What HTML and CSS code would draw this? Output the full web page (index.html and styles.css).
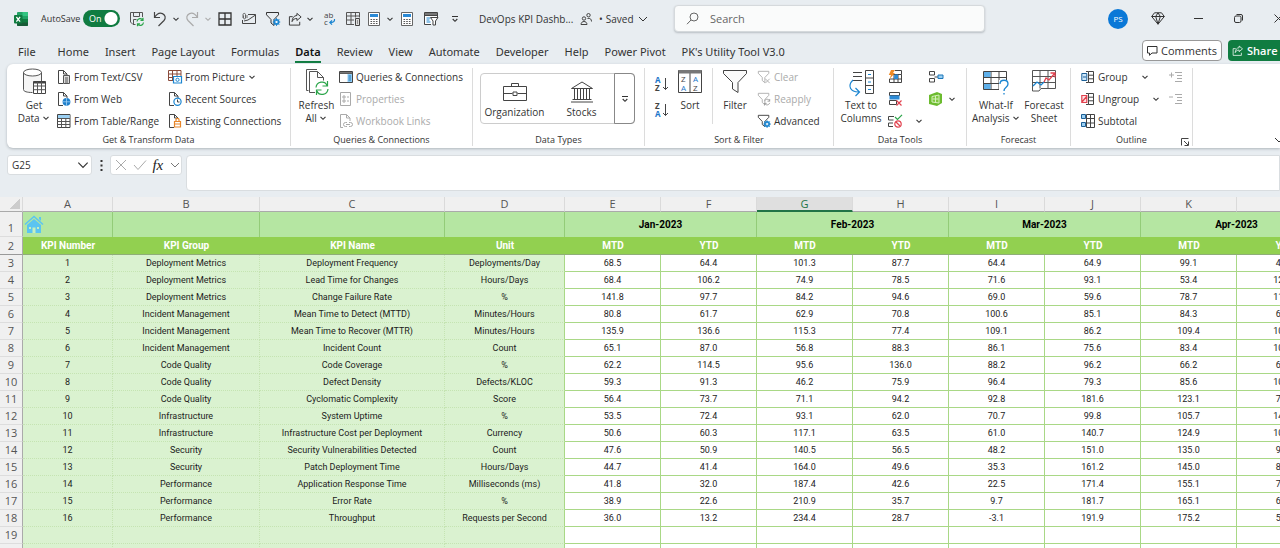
FILE: index.html
```html
<!DOCTYPE html>
<html lang="en">
<head>
<meta charset="utf-8">
<title>DevOps KPI Dashboard</title>
<link rel="stylesheet" href="styles.css">
</head>
<body>
<svg class="sprite" aria-hidden="true">
  <symbol id="chev" viewBox="0 0 8 8"><path d="M1.500 2.800 4 5.300l2.500-2.500" fill="none" stroke="currentColor" stroke-width="1.100"/></symbol>
  <symbol id="chev-wide" viewBox="0 0 12 12"><path d="m2 4 4 4 4-4" fill="none" stroke="currentColor"/></symbol>
  <symbol id="more" viewBox="0 0 8 8"><path d="M1 1.500h6M1.700 4 4 6.300 6.300 4" fill="none" stroke="currentColor" stroke-width="1.100"/></symbol>
  <symbol id="funnel" viewBox="0 0 16 16"><path d="M1.500 1.500h12v2.300L9 8.500v6L6 12V8.500L1.500 3.800z" fill="none" stroke="currentColor"/></symbol>
  <symbol id="gear" viewBox="0 0 8 8"><circle cx="4" cy="4" r="2.200" fill="#fff" stroke="#1c86d1" stroke-width="1.600"/><path d="M4 0v8M0 4h8M1.200 1.200l5.600 5.600M6.800 1.200 1.200 6.800" stroke="#1c86d1" stroke-width=".9"/><circle cx="4" cy="4" r="1" fill="#fff"/></symbol>
  <symbol id="doc" viewBox="0 0 14 14"><path d="M6 13.500H1.500V.5h5l3.500 3.500v2M6.500.5V4H10" fill="#fff" stroke="#444"/></symbol>
  <symbol id="calc" viewBox="0 0 12 14"><path d="M.5.500h11v13H.5z" fill="#fff" stroke="#666"/><path d="M2 2h8v3H2z" fill="#2b8ad6"/><path d="M2.500 7.500h7M2.500 9.500h7M2.500 11.500h7" stroke="#555" stroke-width="1.200" stroke-dasharray="1.600 1.100"/></symbol>
  <symbol id="share" viewBox="0 0 16 14"><path d="M5 4.500H1.500v9h11V10" fill="none" stroke="currentColor"/><path d="M9.500 1 14 4.800 9.500 8.600V6.400C7 6.400 5.300 7.600 4.300 9.800 4.500 6 6.200 3.500 9.500 3.200z" fill="none" stroke="currentColor"/></symbol>
  <symbol id="outline" viewBox="0 0 14 14"><path d="M7.500 1.500h5v11h-5zM7.500 5.200h5M7.500 8.800h5M5 1.500h2.500M5 12.500h2.500" fill="#fff" stroke="#444"/></symbol>
</svg>

<header class="titlebar">
  <svg class="logo" viewBox="0 0 14 14" width="14" height="14"><rect x="3" width="11" height="14" rx="1" fill="#21a366"/><path d="M8.500 0H13a1 1 0 0 1 1 1v3H8.500z" fill="#33c481"/><path d="M3 7h11v6a1 1 0 0 1-1 1H4a1 1 0 0 1-1-1z" fill="#185c37"/><path d="M8.500 7H14v3.500H8.500z" fill="#107c41"/><rect y="3" width="8.500" height="8.500" rx="1" fill="#107c41"/><path d="m2.400 5 3.700 4.600M6.100 5 2.400 9.600" stroke="#fff" stroke-width="1.200"/></svg>
  <label class="autosave" for="autosave">AutoSave</label>
  <span class="toggle"><input type="checkbox" id="autosave" checked><span class="toggle-text" aria-hidden="true">On</span></span>
  <nav class="quick" aria-label="Quick access">
    <button class="s24" aria-label="Save"><svg width="16" height="16" viewBox="0 0 16 16"><path d="M6.500 13.500H4L1.500 11V1.500h12V6M4.500 1.500v4h6v-4M4.500 13.500v-5h3" fill="none" stroke="#555"/><path d="M8 10.500a3.300 3.300 0 0 1 6-1.500M14 6.800V9.300h-2.500M14.500 11.500a3.300 3.300 0 0 1-6 1.500M8.500 15.300v-2.500H11" fill="none" stroke="#2ba54a" stroke-width="1.200"/></svg></button>
    <button class="s22" aria-label="Undo"><svg width="14" height="16" viewBox="0 0 14 16"><path d="M1.500 1v5.500H7M1.500 6.500C4 2.500 7 1.500 9.500 2.600c3 1.400 3.500 4.600 1.500 6.900L5.500 15" fill="none" stroke="#444" stroke-width="1.200"/></svg></button>
    <button class="s10" aria-label="Undo list"><svg width="8" height="8"><use href="#chev"/></svg></button>
    <button class="s22 dim" aria-label="Redo"><svg width="14" height="16" viewBox="0 0 14 16"><path d="M12.500 1v5.500H7M12.500 6.500C10 2.500 7 1.500 4.500 2.600 1.500 4 1 7.200 3 9.500L8.500 15" fill="none" stroke="#aaa" stroke-width="1.200"/></svg></button>
    <button class="s10 dim" aria-label="Redo list"><svg width="8" height="8"><use href="#chev"/></svg></button>
    <button class="s24" aria-label="Borders"><svg width="14" height="14" viewBox="0 0 14 14"><path d="M1 1h12v12H1zM7 1v12M1 7h12" fill="none" stroke="#333" stroke-width="1.300"/></svg></button>
    <button class="s24" aria-label="Email"><svg width="14" height="12" viewBox="0 0 14 12"><path d="M6 1.500h7.500v9H.5V7M2 8l4-1 7.500-5" fill="none" stroke="#444"/><path d="M1 5V1.500C1 0 3.500 0 3.500 1.500V5c0 1.200-2 1.200-2 0V2.500M5 2v3" fill="none" stroke="#666"/></svg></button>
    <button class="s24" aria-label="Advanced filter"><svg width="16" height="16" viewBox="0 0 16 16"><use href="#funnel"/><use href="#gear" x="7.500" y="7" width="8" height="8"/></svg></button>
    <button class="s20" aria-label="Share options"><svg width="15" height="14"><use href="#share"/></svg></button>
    <button class="s10" aria-label="Share list"><svg width="8" height="8"><use href="#chev"/></svg></button>
    <button class="s28" aria-label="Replace"><svg width="14" height="15" viewBox="0 0 14 15"><text x="2" y="7" class="glyph9">ab</text><text x="2" y="14" class="glyph9">c</text><path d="M12.500 8c.5 2.500-1.500 3.500-4.500 3.500M10 9.300 7.800 11.500l2.200 2.200" fill="none" stroke="#1c86d1" stroke-width="1.200"/></svg></button>
    <button class="s20" aria-label="Table"><svg width="15" height="14" viewBox="0 0 15 14"><path d="M.5.500h13v5M8 12.500H.5V.5M.5 4h13M.5 8H8M5 .5v12M9.500.500v5" fill="none" stroke="#555"/><path d="M9.500 6.500h4v7h-4zM11 9h1M11 11h1" fill="#ddd" stroke="#444"/></svg></button>
    <button class="s22" aria-label="Calculate"><svg width="12" height="14"><use href="#calc"/></svg></button>
    <button class="s10" aria-label="Calculate list"><svg width="8" height="8"><use href="#chev"/></svg></button>
    <button class="s24" aria-label="Calculate sheet"><svg width="12" height="14"><use href="#calc"/></svg></button>
    <button class="s24" aria-label="Filter form"><svg width="15" height="14" viewBox="0 0 15 14"><path d="M7 12.500H.5V.5h13V5M.5 3.500h13" fill="#fff" stroke="#444"/><path d="M1 1h12v2H1z" fill="#777"/><path d="M2.500 6h4M2.500 8h3M2.500 10h4" stroke="#1c86d1"/><path d="M6.500 5.500h7.500l-2.500 3.500v4H9V9z" fill="#fff" stroke="#444"/></svg></button>
    <button class="s24" aria-label="Customize"><svg width="8" height="8"><use href="#more"/></svg></button>
  </nav>
  <button class="doc-name">DevOps KPI Dashb...</button>
  <svg class="people" width="12" height="12" viewBox="0 0 12 12" fill="none" stroke="#444"><circle cx="4" cy="5.500" r="1.700"/><path d="M1 11.500C1 7.500 7 7.500 7 11.500z"/><circle cx="8.500" cy="2.200" r="1.700"/><path d="M7.500 5.500c2.500-.8 4 .7 4 3"/></svg>
  <button class="saved"><span>•</span><span>Saved</span><svg width="12" height="12"><use href="#chev-wide"/></svg></button>
  <label class="search"><svg width="13" height="13" viewBox="0 0 13 13" fill="none" stroke="#666"><circle cx="8" cy="5" r="4"/><path d="M5 8 1 12.200"/></svg><input type="search" placeholder="Search" aria-label="Search"></label>
  <div class="window-controls">
    <button class="avatar">PS</button>
    <button aria-label="Premium"><svg width="14" height="13" viewBox="0 0 14 13"><path d="M3.500.8h7L13.300 4.500 7 12.200.7 4.500zM.7 4.500h12.600M4.700 4.500 7 12.200l2.300-7.700L7 .8z" fill="none" stroke="#333"/></svg></button>
    <button aria-label="Minimize"><svg width="9" height="9" viewBox="0 0 9 9"><path d="M0 4.500h9" stroke="#333"/></svg></button>
    <button aria-label="Restore"><svg width="9" height="9" viewBox="0 0 9 9" fill="none" stroke="#333"><rect x=".5" y="2" width="6.500" height="6.500" rx="1.500"/><path d="M2.500.5H7A1.500 1.500 0 0 1 8.500 2v4.500"/></svg></button>
    <button aria-label="Close"><svg width="9" height="9" viewBox="0 0 9 9"><path d="m.5.500 8 8M8.500.500l-8 8" stroke="#333"/></svg></button>
  </div>
</header>

<div class="tabbar">
  <nav class="tabs" aria-label="Ribbon tabs">
    <button class="file">File</button><button>Home</button><button>Insert</button><button>Page Layout</button><button>Formulas</button><button class="active">Data</button><button>Review</button><button>View</button><button>Automate</button><button>Developer</button><button>Help</button><button>Power Pivot</button><button>PK's Utility Tool V3.0</button>
  </nav>
  <button class="comments"><svg width="11" height="10" viewBox="0 0 11 10"><path d="M.5.500h9.500v6.500H5L2.500 9.300V7h-2z" fill="none" stroke="#333"/></svg>Comments</button>
  <button class="share"><svg width="12" height="11"><use href="#share"/></svg>Share</button>
</div>

<main>
<section class="ribbon" aria-label="Data tools">
  <div class="group g-get">
    <div class="tools">
      <button class="big"><svg width="26" height="28" viewBox="0 0 26 28"><path d="M2.500 4.500v17c0 2 3.500 3 9 3h9v-20z" fill="#f5f5f5"/><ellipse cx="11.500" cy="4.500" rx="9" ry="3.500" fill="#fff" stroke="#555"/><path d="M2.500 4.500v17c0 2 3.500 3 9 3M20.500 4.500V14" fill="none" stroke="#555"/><path d="M12.500 13.500h12v12h-12z" fill="#fff" stroke="#444"/><path d="M12.500 14.500h12" stroke="#444" stroke-width="2"/><path d="M12.500 18h12M12.500 21.700h12M16.500 14v12M20.500 14v12" stroke="#555"/></svg><span>Get<br>Data <svg width="8" height="8"><use href="#chev"/></svg></span></button>
      <div class="stack c-from">
        <button><svg width="14" height="14" viewBox="0 0 14 14"><use href="#doc"/><path d="M6.500 5.500h6v8h-6zM8 8h3M8 10h3M8 12h3" fill="#ddd" stroke="#555"/></svg>From Text/CSV</button>
        <button><svg width="14" height="14" viewBox="0 0 14 14"><use href="#doc"/><circle cx="9.500" cy="9.800" r="3.900" fill="#1f7fcb"/><path d="M5.600 9.800h7.800M9.500 6v7.600" stroke="#9fd0f5" stroke-width=".8"/></svg>From Web</button>
        <button><svg width="14" height="14" viewBox="0 0 14 14"><path d="M.5.500h12.500v13H.5z" fill="#fff" stroke="#444"/><path d="M1 1h11.500v3H1z" fill="#9bd0f3"/><path d="M.5 4.500H13M.5 7.500H13M.5 10.500H13M4.500 4.500v9M8.800 4.500v9" stroke="#555"/></svg>From Table/Range</button>
      </div>
      <div class="stack">
        <button><svg width="14" height="14" viewBox="0 0 14 14"><path d="M.5.500h12.500v10H.5zM.5 4H13M.5 7.500H13M4.500.500v10M9 .5v10" fill="#fff" stroke="#8a4b3b"/><path d="M5.500 6.500h8v6.500h-8z" fill="#fff" stroke="#1c86d1" stroke-width="1.200"/><circle cx="9.500" cy="9.800" r="1.600" fill="none" stroke="#1c86d1"/></svg>From Picture <svg width="8" height="8"><use href="#chev"/></svg></button>
        <button><svg width="14" height="14" viewBox="0 0 14 14"><use href="#doc"/><circle cx="9.500" cy="9.800" r="3.600" fill="#fff" stroke="#1c86d1" stroke-width="1.200"/><path d="M9.500 7.500V10h2" fill="none" stroke="#444"/></svg>Recent Sources</button>
        <button><svg width="14" height="14" viewBox="0 0 14 14"><use href="#doc"/><path d="M6.500 7.500h6V13h-6zM8 7.500V5.500c0-1.500 3-1.500 3 0v2M6.500 10h6" fill="#fff" stroke="#e8862a" stroke-width="1.200"/></svg>Existing Connections</button>
      </div>
    </div>
    <h2>Get &amp; Transform Data</h2>
  </div>

  <div class="group g-queries">
    <div class="tools">
      <button class="big"><svg width="26" height="28" viewBox="0 0 26 28"><path d="M4.500 22.500h-2v-21H13M11 24.500H5.500v-21h8l6 6v3M13.500 3.500v6h6" fill="none" stroke="#555"/><path d="M12 19.500c.5-6 9-7.500 11-2M23.500 13v5h-5M24 21c-.5 6-9 7.500-11 2M12.500 27v-5h5" fill="none" stroke="#2ba54a" stroke-width="1.200"/></svg><span>Refresh<br>All <svg width="8" height="8"><use href="#chev"/></svg></span></button>
      <div class="stack">
        <button><svg width="14" height="14" viewBox="0 0 14 14"><path d="M.5 1.500h13v11H.5zM.5 3.500h13" fill="#fff" stroke="#444"/><path d="M1 2h12v1.500H1z" fill="#777"/><path d="M8.500 4H13v8H8.500z" fill="#8fcbf3"/><path d="M9.500 6h2.500M9.500 8h2.500M9.500 10h2.500" stroke="#1c76b9"/></svg>Queries &amp; Connections</button>
        <button disabled><svg width="14" height="14" viewBox="0 0 14 14"><path d="M1.500.5h10v13h-10zM4 4h2v2H4zM4 8h2v2H4zM8 5h2M8 9h2" fill="none" stroke="#aaa"/></svg>Properties</button>
        <button disabled><svg width="14" height="14" viewBox="0 0 14 14"><path d="M4 13.500H1.500V.5h6L11 4v3M7.500.5V4H11" fill="none" stroke="#aaa"/><path d="M8 12.500H6.500a2 2 0 0 1 0-4H8M10 8.500h1.500a2 2 0 0 1 0 4H10M7 10.500h4" fill="none" stroke="#aaa"/></svg>Workbook Links</button>
      </div>
    </div>
    <h2>Queries &amp; Connections</h2>
  </div>

  <div class="group g-types">
    <div class="tools">
      <div class="gallery">
        <button><svg width="26" height="22" viewBox="0 0 26 22" fill="none" stroke="#444"><path d="M1.500 5.500h23v14h-23zM9.500 5.500v-3h7v3M1.500 12.500h9M15.500 12.500h9M11 11h4v3.500h-4z"/></svg>Organization</button>
        <button><svg width="26" height="22" viewBox="0 0 26 22" fill="none" stroke="#444"><path d="M2.500 7.500 13 1l10.500 6.500zM3.500 18.500h19M2 21h22M5.500 8v10M8.500 8v10M11.500 8v10M14.500 8v10M17.500 8v10M20.500 8v10"/></svg>Stocks</button>
        <button class="gallery-more" aria-label="More data types"><svg width="8" height="8"><use href="#more"/></svg></button>
      </div>
    </div>
    <h2>Data Types</h2>
  </div>

  <div class="group g-sort">
    <div class="tools">
      <div class="az">
        <button aria-label="Sort A to Z"><svg width="15" height="16" viewBox="0 0 15 16"><text x="1" y="7" class="glyph8 blue">A</text><text x="1" y="15" class="glyph8">Z</text><path d="M11.500 2v11.500M9 11l2.500 2.500L14 11" fill="none" stroke="#444"/></svg></button>
        <button aria-label="Sort Z to A"><svg width="15" height="16" viewBox="0 0 15 16"><text x="1" y="7" class="glyph8">Z</text><text x="1" y="15" class="glyph8 blue">A</text><path d="M11.500 2v11.500M9 11l2.500 2.500L14 11" fill="none" stroke="#444"/></svg></button>
      </div>
      <button class="big"><svg width="26" height="28" viewBox="0 0 26 28"><path d="M1.500 2.500h23v22h-23zM13 5v20" fill="#fff" stroke="#444"/><path d="M1.500 2h23v3.500h-23z" fill="#777"/><text x="4" y="14" class="glyph9">Z</text><text x="4" y="23" class="glyph9 blue">A</text><text x="16" y="14" class="glyph9 blue">A</text><text x="16" y="23" class="glyph9">Z</text></svg><span>Sort</span></button>
      <i class="rule"></i>
      <button class="big filter"><svg width="26" height="28" viewBox="0 0 26 28"><path d="M1.500 2.500h23v3L16 14.500v10L10.500 21v-6.500L1.500 5.500z" fill="#fafafa" stroke="#444"/></svg><span>Filter</span></button>
      <div class="stack">
        <button disabled><svg width="14" height="14" viewBox="0 0 16 16"><use href="#funnel"/><path d="m9.500 10 5 5M14.500 10l-5 5" stroke="#aaa"/></svg>Clear</button>
        <button disabled><svg width="14" height="14" viewBox="0 0 16 16"><use href="#funnel"/><path d="M8.500 10.500c1-3 5-3 6 0M14.500 8v2.500H12M14.500 12.500c-1 3-5 3-6 0M8.500 15.500V13H11" fill="none" stroke="#999"/></svg>Reapply</button>
        <button><svg width="14" height="14" viewBox="0 0 16 16"><use href="#funnel"/><use href="#gear" x="7" y="7" width="9" height="9"/></svg>Advanced</button>
      </div>
    </div>
    <h2>Sort &amp; Filter</h2>
  </div>

  <div class="group g-tools">
    <div class="tools">
      <button class="big"><svg width="26" height="28" viewBox="0 0 26 28"><path d="M17.500 2.500h8v23h-8zM17.500 10h8M17.500 17.500h8" fill="#fff" stroke="#444"/><path d="M20 6.500h3M20 14h3M20 21.500h3" stroke="#1c86d1"/><path d="M5 4.500h9M5 8.500h9M5 12.500h9" stroke="#444"/><path d="M5 12c-6 6-2.500 12 5.500 12M7.500 20l4 4-4 4" fill="none" stroke="#1c86d1" stroke-width="1.200"/></svg><span>Text to<br>Columns</span></button>
      <div class="icons">
        <button aria-label="Flash Fill"><svg width="15" height="14" viewBox="0 0 15 14"><path d="M3.500 4.500h10v8h-12V9M1.500 9h12M6 4v9M10 4v9M7 .5h6.500v4" fill="none" stroke="#444"/><path d="M6.500 4.500h3.500V9H6z" fill="#2b8ad6"/><path d="M3 0h4L5 3h2L1.500 9 3 5H.8z" fill="#f08a24"/></svg></button>
        <button aria-label="Remove Duplicates"><svg width="15" height="14" viewBox="0 0 15 14"><path d="M1.500.500h10v3h-10zM1.500 8.500h7v4h-7z" fill="#fff" stroke="#444"/><path d="M1.500 3.500h10v4h-10z" fill="#2b8ad6"/><path d="m8.500 8.500 5 5M13.500 8.500l-5 5" stroke="#e2424f" stroke-width="1.200"/></svg></button>
        <span class="pair"><button aria-label="Data Validation"><svg width="15" height="14" viewBox="0 0 15 14"><path d="M6 2.500H.5v3.500h5M5 9H.5v3.500H5" fill="none" stroke="#444"/><path d="m7 3 2.500 2.500L14 .8" fill="none" stroke="#2ba54a" stroke-width="1.200"/><circle cx="10" cy="10" r="3.200" fill="#fff" stroke="#e2424f" stroke-width="1.200"/><path d="m8 8 4 4" stroke="#e2424f" stroke-width="1.200"/></svg></button><button aria-label="Data Validation list"><svg width="8" height="8"><use href="#chev"/></svg></button></span>
      </div>
      <div class="icons second">
        <button aria-label="Consolidate"><svg width="15" height="14" viewBox="0 0 15 14"><path d="M.5 1.500h5v3.500h-5zM.5 8.500h5V12h-5z" fill="#fff" stroke="#444"/><path d="M5.500 7H9" stroke="#444"/><path d="M9 5h5v3.500H9z" fill="#9bd0f3" stroke="#1c76b9"/></svg></button>
        <span class="pair"><button aria-label="Data Model"><svg width="15" height="14" viewBox="0 0 15 14"><path d="M0 3 8 0l5 2v9l-5 3-8-2z" fill="#6cbb2f"/><path d="M3 4.500 10 3v8l-7-1z" fill="#7fc83f" stroke="#d5f0bd"/><path d="M3.500 7h6M6.500 4v6.500" stroke="#d5f0bd"/></svg></button><button aria-label="Data Model list"><svg width="8" height="8"><use href="#chev"/></svg></button></span>
      </div>
    </div>
    <h2>Data Tools</h2>
  </div>

  <div class="group g-forecast">
    <div class="tools">
      <button class="big"><svg width="28" height="28" viewBox="0 0 28 28"><path d="M1.500 3.500h23v18h-23zM1.500 9.500h23M1.500 15.500h23M9 3.500v18M17 3.500v18" fill="#fff" stroke="#444"/><path d="M2 4h6.500v5H2zM2 16h6.500v5H2z" fill="#5fb0ea"/><path d="M17 12h10v14H17z" fill="#fff"/><path d="M18 16c0-5 8-5 8 0 0 3.500-4 3-4 7" fill="none" stroke="#1c86d1" stroke-width="1.300"/><path d="M22 25v1.500" stroke="#1c86d1" stroke-width="1.300"/></svg><span>What-If<br>Analysis <svg width="8" height="8"><use href="#chev"/></svg></span></button>
      <button class="big"><svg width="26" height="28" viewBox="0 0 26 28"><path d="M1.500 2.500h23v18H10l-2 2.500H1.500zM1.500 8.500h23M1.500 14.500h23M9 2.500v18M17 2.500v18" fill="#fff" stroke="#555"/><path d="m2 18 4-4 4 3 3-3" fill="none" stroke="#1c86d1" stroke-width="1.300"/><path d="m13 14 2-4 3 2 6-7M19.500 5H24v4.500" fill="none" stroke="#e2424f" stroke-width="1.300"/></svg><span>Forecast<br>Sheet</span></button>
    </div>
    <h2>Forecast</h2>
  </div>

  <div class="group g-outline">
    <div class="tools">
      <div class="stack">
        <span class="split"><button><svg width="14" height="14" viewBox="0 0 14 14"><use href="#outline"/><path d="M.8 3.500h5v7h-5z" fill="#cfe8fa" stroke="#1c5f96"/><path d="M2 7h3" stroke="#1c5f96"/></svg>Group</button><button aria-label="Group list"><svg width="8" height="8"><use href="#chev"/></svg></button></span>
        <span class="split"><button><svg width="14" height="14" viewBox="0 0 14 14"><use href="#outline"/><path d="M.8 3.500h5v7h-5zM1 10l5-6" fill="#fde3e5" stroke="#e2424f" stroke-width="1.200"/></svg>Ungroup</button><button aria-label="Ungroup list"><svg width="8" height="8"><use href="#chev"/></svg></button></span>
        <button><svg width="14" height="14" viewBox="0 0 14 14"><path d="M5.500.500h8v13h-8zM9.500.500v13M5.500 4.500h8M5.500 9h8" fill="#fff" stroke="#444"/><path d="M.5.500h4v4h-4zM.5 8.500h4v4h-4z" fill="#9bd0f3" stroke="#1c5f96"/></svg>Subtotal</button>
      </div>
      <div class="icons detail">
        <button disabled aria-label="Show Detail"><svg width="14" height="12" viewBox="0 0 14 12"><path d="M0 4h5M2.500 1.500v5M6 1.500h7M8 4.500h5M8 7.500h5M6 10.500h7" stroke="#aaa"/></svg></button>
        <button disabled aria-label="Hide Detail"><svg width="14" height="12" viewBox="0 0 14 12"><path d="M0 4h4M6 1.500h7M8 4.500h5M8 7.500h5M6 10.500h7" stroke="#aaa"/></svg></button>
      </div>
    </div>
    <h2>Outline</h2>
    <button class="launcher" aria-label="Outline settings"><svg width="8" height="8" viewBox="0 0 8 8"><path d="M.5 7.500V.5h7M3 3l4 4M7.500 3.500v4h-4" fill="none" stroke="#444"/></svg></button>
  </div>
  <button class="collapse" aria-label="Collapse ribbon"><svg width="12" height="12"><use href="#chev-wide"/></svg></button>
</section>

<div class="formula-row">
  <label class="name-box"><input type="text" value="G25" aria-label="Name box"><svg width="14" height="14"><use href="#chev-wide"/></svg></label>
  <svg class="dots" width="3" height="11" viewBox="0 0 3 11" fill="#333"><path d="M.5 0h2v2h-2zM.5 4.500h2v2h-2zM.5 9h2v2h-2z"/></svg>
  <div class="fx">
    <button aria-label="Cancel"><svg width="12" height="12" viewBox="0 0 12 12"><path d="m1 1 10 10M11 1 1 11" stroke="#aaa"/></svg></button>
    <button aria-label="Enter"><svg width="14" height="12" viewBox="0 0 14 12"><path d="m1 6 4 4.500L13 1.500" fill="none" stroke="#aaa"/></svg></button>
    <button class="fx-label">fx</button>
    <button aria-label="Functions"><svg width="12" height="12"><use href="#chev-wide"/></svg></button>
  </div>
  <input class="formula" type="text" aria-label="Formula bar">
</div>

<div class="sheet">
<svg class="home" viewBox="0 0 20 18" width="20" height="18" aria-hidden="true"><path d="M1 9.500 10 1.500l9 8" fill="none" stroke="#5bc4f1" stroke-width="1.500"/><path d="M3 10 10 4l7 6v8H3z" fill="#5bc4f1"/><path d="M15 2h2v4l-2-2z" fill="#5bc4f1"/><path d="M8.500 12.500h3V18h-3zM5 12h2v2H5zM13 12h2v2h-2z" fill="#c6efc0"/></svg>
<table>
<colgroup><col class="w-num"><col class="w-a"><col class="w-b"><col class="w-c"><col class="w-d"><col span="8" class="w-v"></colgroup>
<thead>
<tr class="letters"><th class="corner"></th><th>A</th><th>B</th><th>C</th><th>D</th><th>E</th><th>F</th><th class="sel">G</th><th>H</th><th>I</th><th>J</th><th>K</th><th>L</th></tr>
<tr class="months"><th>1</th><td></td><td></td><td></td><td></td><td colspan="2">Jan-2023</td><td colspan="2">Feb-2023</td><td colspan="2">Mar-2023</td><td colspan="2">Apr-2023</td></tr>
<tr class="titles"><th>2</th><td>KPI Number</td><td>KPI Group</td><td>KPI Name</td><td>Unit</td><td>MTD</td><td>YTD</td><td>MTD</td><td>YTD</td><td>MTD</td><td>YTD</td><td>MTD</td><td>YTD</td></tr>
</thead>
<tbody>
<tr><th>3</th><td>1</td><td>Deployment Metrics</td><td>Deployment Frequency</td><td>Deployments/Day</td><td>68.5</td><td>64.4</td><td>101.3</td><td>87.7</td><td>64.4</td><td>64.9</td><td>99.1</td><td>48.2</td></tr>
<tr><th>4</th><td>2</td><td>Deployment Metrics</td><td>Lead Time for Changes</td><td>Hours/Days</td><td>68.4</td><td>106.2</td><td>74.9</td><td>78.5</td><td>71.6</td><td>93.1</td><td>53.4</td><td>122.4</td></tr>
<tr><th>5</th><td>3</td><td>Deployment Metrics</td><td>Change Failure Rate</td><td>%</td><td>141.8</td><td>97.7</td><td>84.2</td><td>94.6</td><td>69.0</td><td>59.6</td><td>78.7</td><td>111.3</td></tr>
<tr><th>6</th><td>4</td><td>Incident Management</td><td>Mean Time to Detect (MTTD)</td><td>Minutes/Hours</td><td>80.8</td><td>61.7</td><td>62.9</td><td>70.8</td><td>100.6</td><td>85.1</td><td>84.3</td><td>65.0</td></tr>
<tr><th>7</th><td>5</td><td>Incident Management</td><td>Mean Time to Recover (MTTR)</td><td>Minutes/Hours</td><td>135.9</td><td>136.6</td><td>115.3</td><td>77.4</td><td>109.1</td><td>86.2</td><td>109.4</td><td>102.7</td></tr>
<tr><th>8</th><td>6</td><td>Incident Management</td><td>Incident Count</td><td>Count</td><td>65.1</td><td>87.0</td><td>56.8</td><td>88.3</td><td>86.1</td><td>75.6</td><td>83.4</td><td>104.1</td></tr>
<tr><th>9</th><td>7</td><td>Code Quality</td><td>Code Coverage</td><td>%</td><td>62.2</td><td>114.5</td><td>95.6</td><td>136.0</td><td>88.2</td><td>96.2</td><td>66.2</td><td>63.9</td></tr>
<tr><th>10</th><td>8</td><td>Code Quality</td><td>Defect Density</td><td>Defects/KLOC</td><td>59.3</td><td>91.3</td><td>46.2</td><td>75.9</td><td>96.4</td><td>79.3</td><td>85.6</td><td>103.5</td></tr>
<tr><th>11</th><td>9</td><td>Code Quality</td><td>Cyclomatic Complexity</td><td>Score</td><td>56.4</td><td>73.7</td><td>71.1</td><td>94.2</td><td>92.8</td><td>181.6</td><td>123.1</td><td>74.6</td></tr>
<tr><th>12</th><td>10</td><td>Infrastructure</td><td>System Uptime</td><td>%</td><td>53.5</td><td>72.4</td><td>93.1</td><td>62.0</td><td>70.7</td><td>99.8</td><td>105.7</td><td>142.0</td></tr>
<tr><th>13</th><td>11</td><td>Infrastructure</td><td>Infrastructure Cost per Deployment</td><td>Currency</td><td>50.6</td><td>60.3</td><td>117.1</td><td>63.5</td><td>61.0</td><td>140.7</td><td>124.9</td><td>106.8</td></tr>
<tr><th>14</th><td>12</td><td>Security</td><td>Security Vulnerabilities Detected</td><td>Count</td><td>47.6</td><td>50.9</td><td>140.5</td><td>56.5</td><td>48.2</td><td>151.0</td><td>135.0</td><td>94.3</td></tr>
<tr><th>15</th><td>13</td><td>Security</td><td>Patch Deployment Time</td><td>Hours/Days</td><td>44.7</td><td>41.4</td><td>164.0</td><td>49.6</td><td>35.3</td><td>161.2</td><td>145.0</td><td>84.6</td></tr>
<tr><th>16</th><td>14</td><td>Performance</td><td>Application Response Time</td><td>Milliseconds (ms)</td><td>41.8</td><td>32.0</td><td>187.4</td><td>42.6</td><td>22.5</td><td>171.4</td><td>155.1</td><td>74.9</td></tr>
<tr><th>17</th><td>15</td><td>Performance</td><td>Error Rate</td><td>%</td><td>38.9</td><td>22.6</td><td>210.9</td><td>35.7</td><td>9.7</td><td>181.7</td><td>165.1</td><td>65.2</td></tr>
<tr><th>18</th><td>16</td><td>Performance</td><td>Throughput</td><td>Requests per Second</td><td>36.0</td><td>13.2</td><td>234.4</td><td>28.7</td><td>-3.1</td><td>191.9</td><td>175.2</td><td>55.5</td></tr>
<tr><th>19</th><td></td><td></td><td></td><td></td><td></td><td></td><td></td><td></td><td></td><td></td><td></td><td></td></tr>
<tr><th>20</th><td></td><td></td><td></td><td></td><td></td><td></td><td></td><td></td><td></td><td></td><td></td><td></td></tr>
</tbody>
</table>
</div>
</main>
</body>
</html>
```
FILE: styles.css
```css
* { box-sizing: border-box; }
body {
  margin: 0;
  height: 100vh;
  overflow: hidden;
  background: #e8edf1;
  color: #333;
  font: 10px/16px "Open Sans", "Noto Sans", sans-serif;
}
button, input { font: inherit; color: inherit; border: 0; padding: 0; margin: 0; background: none; }
button { display: flex; align-items: center; justify-content: center; white-space: nowrap; }
svg { flex: none; display: block; overflow: visible; }
.sprite { position: absolute; width: 0; height: 0; }
.glyph8, .glyph9 { font: 700 8px "Open Sans", sans-serif; fill: #444; }
.glyph9 { font-weight: 400; }
.blue { fill: #1c76c9; }

.titlebar { display: flex; align-items: center; height: 37px; padding-left: 14px; overflow: hidden; }
.autosave { width: 42px; margin-left: 13px; white-space: nowrap; font-size: 9px; }
.toggle { display: grid; align-items: center; width: 37px; }
.toggle > * { grid-area: 1 / 1; }
.toggle input { appearance: none; width: 37px; height: 17px; border-radius: 9px; background: radial-gradient(circle at 28px 50%, #fff 6px, transparent 7px) #107c41; }
.toggle-text { padding-left: 6px; color: #fff; font-size: 9px; pointer-events: none; }
.quick { display: flex; align-items: center; margin-left: 5px; }
.quick button { height: 24px; }
.s10 { width: 10px; }
.s20 { width: 20px; }
.s22 { width: 22px; }
.s24 { width: 24px; }
.s28 { width: 28px; }
.dim { color: #aaa; }
.doc-name { width: 92px; margin-left: 12px; justify-content: flex-start; }
.people { margin: 0 7px 0 9px; }
.saved { width: 48px; gap: 3px; justify-content: flex-start; }
.search { display: flex; align-items: center; gap: 11px; flex: 0 1 311px; height: 27px; margin-left: 27px; padding: 0 11px; border: 1px solid #d5d9dc; border-radius: 4px; background: #fafbfb; box-shadow: 0 1px 2px #b9bfc4; }
.search input { flex: 1; min-width: 0; outline: 0; font-size: 11px; }
.search input::placeholder { color: #666; opacity: 1; }
.window-controls { display: flex; align-items: center; margin-left: auto; margin-right: -18px; }
.window-controls button { width: 40px; height: 24px; }
.window-controls .avatar { width: 20px; height: 20px; margin-right: 10px; border-radius: 50%; background: #0a78d7; color: #fff; font-size: 8px; }

.tabbar { display: flex; align-items: center; height: 27px; overflow: hidden; font-size: 11px; }
.tabs { display: flex; flex: 1; gap: 16px; padding: 2px 0 0 18px; font-family: "Noto Sans", sans-serif; }
.tabs button { height: 22px; }
.tabs .file { margin-right: 6px; }
.tabs .active { font-weight: 600; color: #111; box-shadow: inset 0 -2px #107c41; }
.comments { width: 80px; height: 21px; gap: 3px; border: 1px solid #999; border-radius: 4px; background: #fff; }
.share { width: 60px; height: 21px; margin: 0 -8px 0 6px; gap: 3px; padding-left: 4px; justify-content: flex-start; border-radius: 4px; background: #107c41; color: #fff; font-weight: 600; }

main { display: flex; flex-direction: column; min-width: 0; }
.ribbon { display: flex; height: 84px; margin-left: 7px; padding: 4px 0 2px; border-radius: 6px 0 0 6px; background: #fff; box-shadow: 0 1px 3px #aeb5ba; }
.group { position: relative; display: flex; flex-direction: column; flex: none; border-right: 1px solid #dcdcdc; }
.group h2 { margin: 0; font-size: 9px; line-height: 12px; font-weight: 400; text-align: center; }
.tools { display: flex; align-items: flex-start; height: 66px; }
.big { flex-direction: column; justify-content: flex-start; gap: 3px; }
.big span { line-height: 13px; }
.big span svg, .stack button svg + svg { display: inline-block; }
.stack { display: flex; flex-direction: column; }
.stack button { height: 22px; gap: 3px; justify-content: flex-start; padding-bottom: 4px; }
button:disabled { color: #aaa; }
.g-get { width: 284px; }
.g-get .big { width: 50px; padding-left: 4px; }
.c-from { width: 111px; }
.g-queries { width: 182px; }
.g-queries .big { width: 48px; padding-left: 3px; }
.g-types { width: 172px; }
.g-sort { width: 189px; }
.g-tools { width: 133px; }
.g-forecast { width: 104px; }
.g-outline { width: 122px; }
.gallery { display: flex; width: 155px; height: 51px; margin: 5px 0 0 7px; border: 1px solid #ccc; border-radius: 4px; }
.gallery button { flex: 1; flex-direction: column; gap: 1px; padding-top: 3px; }
.gallery .gallery-more { flex: 0 0 21px; margin: -1px; padding: 0; border: 1px solid #888; border-radius: 0 4px 4px 0; }
.az { display: flex; flex-direction: column; gap: 10px; padding: 8px 8px 0 9px; }
.rule { width: 1px; height: 56px; margin: 0 8px 0 9px; background: #dcdcdc; }
.filter { width: 28px; margin-right: 8px; }
.g-tools .big { width: 54px; }
.icons { display: flex; flex-direction: column; align-items: flex-start; }
.icons button { height: 22px; padding-bottom: 4px; }
.pair { display: flex; gap: 12px; }
.second { margin-left: 6px; }
.second .pair { gap: 4px; }
.g-forecast .tools { padding-left: 5px; }
.g-forecast .big { width: 48px; }
.g-outline .stack { width: 88px; padding-left: 10px; }
.split { display: flex; gap: 13px; }
.detail { padding-left: 10px; }
.launcher { position: absolute; right: 3px; bottom: 0; }
.collapse { margin-left: auto; margin-right: -5px; align-self: flex-end; }

.formula-row { display: flex; align-items: flex-start; height: 49px; padding: 7px 0 0 7px; }
.name-box, .fx { display: flex; align-items: center; height: 20px; border: 1px solid #d9dde0; border-radius: 3px; background: #fff; }
.name-box { width: 85px; padding: 0 1px 0 4px; }
.name-box input { flex: 1; min-width: 0; outline: 0; }
.dots { margin: 5px 7px 0 8px; }
.fx { width: 72px; padding: 0 0 0 4px; justify-content: space-between; color: #777; }
.fx-label { font: italic 15px "Liberation Serif", serif; color: #222; }
.formula { flex: 1; height: 36px; margin-left: 4px; border: 1px solid #d9dde0; border-radius: 4px 0 0 4px; background: #fff; outline: 0; }

.sheet { position: relative; overflow: hidden; }
.home { position: absolute; left: 24px; top: 18px; }
table { table-layout: fixed; width: 1332px; border-collapse: separate; border-spacing: 0; font: 9px/16px Roboto, sans-serif; color: #1c1c1c; }
.w-num { width: 23px; }
.w-a { width: 90px; }
.w-b { width: 147px; }
.w-c { width: 185px; }
.w-d { width: 120px; }
.w-v { width: 96px; }
th, td { height: 17px; padding: 0; text-align: center; white-space: nowrap; }
th { border-right: 1px solid #aaa; border-bottom: 1px solid #ddd; background: #f0f0f0; color: #555; font: 11px/16px "Open Sans", sans-serif; }
td { border-right: 1px solid #a9d886; border-bottom: 1px solid #a9d886; background: #fff; }
td:nth-child(-n+5) { border-right: 1px dotted #c5e4b2; border-bottom: 1px dotted #c5e4b2; background: #daf2d0; }
td:nth-child(5) { border-right: 1px solid #a9d886; }
.letters th { height: 15px; line-height: 14px; border-right: 1px solid #dadada; border-bottom: 1px solid #aaa; }
.letters .sel { background: #dfdfdf; color: #217346; border-bottom: 2px solid #217346; line-height: 13px; }
.letters .corner { background: linear-gradient(135deg, transparent 50%, #ccc 50%) 10px 2px / 10px 10px no-repeat #f0f0f0; }
.months th { height: 25px; vertical-align: bottom; line-height: 16px; }
.months td, .months td:nth-child(-n+5) { border-right: 1px solid #93cc78; border-bottom: 0; background: #b5e6a2; font-size: 10px; font-weight: 700; color: #000; }
.titles th, .titles td { height: 18px; }
.titles td, .titles td:nth-child(-n+5) { border-right: 0; border-bottom: 1px solid #8fae78; background: #92d050; color: #fff; font-size: 10px; font-weight: 700; }
.titles th { border-bottom-color: #999; }
```
